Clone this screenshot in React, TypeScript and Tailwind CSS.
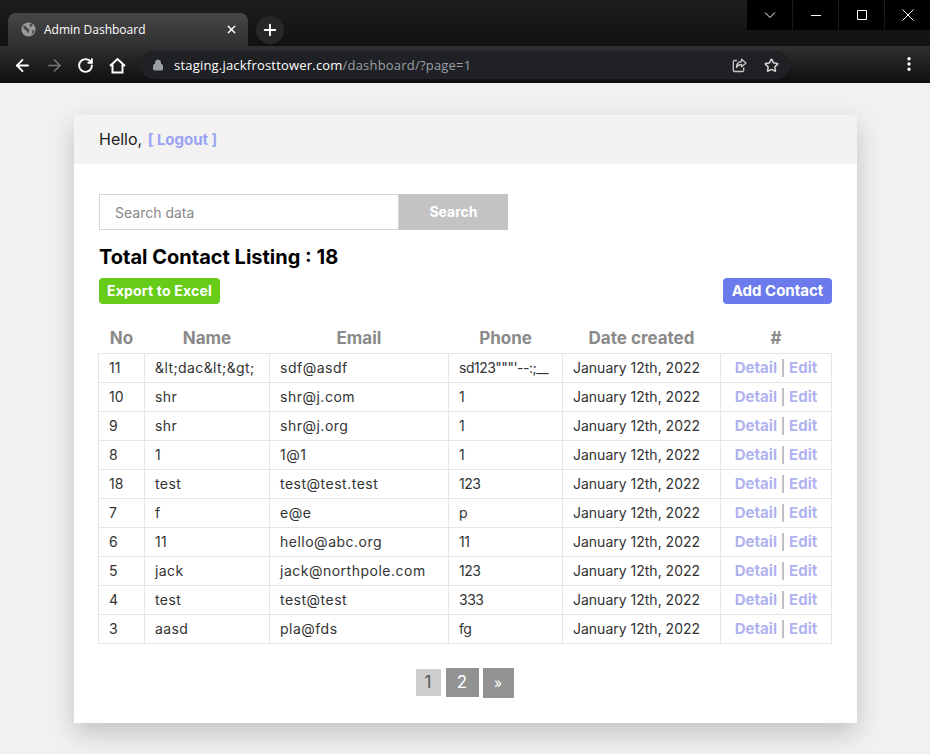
import { ArrowLeft, ArrowRight, RotateCw, Lock, Star, EllipsisVertical, X, Plus } from 'lucide-react';

const rows = [
  ['11', '&lt;dac&lt;&gt;', 'sdf@asdf', 'sd123"""\'--:;__'],
  ['10', 'shr', 'shr@j.com', '1'],
  ['9', 'shr', 'shr@j.org', '1'],
  ['8', '1', '1@1', '1'],
  ['18', 'test', 'test@test.test', '123'],
  ['7', 'f', 'e@e', 'p'],
  ['6', '11', 'hello@abc.org', '11'],
  ['5', 'jack', 'jack@northpole.com', '123'],
  ['4', 'test', 'test@test', '333'],
  ['3', 'aasd', 'pla@fds', 'fg'],
];

function GlobeIcon() {
  return (
    <svg viewBox="0 0 16 16" className="h-[15px] w-[15px]">
      <circle cx="8" cy="8" r="7.5" fill="#9a9a9a" />
      <path d="M2.5 4.5 5 4l1.5 2.5L9 8l-1 3-1.5 1-.5-3-3-1.5zM9.5 1.5l3 1.5-1 2-2.5-.5zM12 9l2.5-.5-1.5 3.500-1.500 1z" fill="#4a4a4a" />
    </svg>
  );
}

function HomeIcon() {
  return (
    <svg viewBox="0 0 17 17" className="h-[17px] w-[17px]" fill="none" stroke="white" strokeWidth="2" strokeLinejoin="miter">
      <path d="M1 9 8.500 2 16 9M3.500 7.500V15.500h10V7.500" />
    </svg>
  );
}

function ShareIcon() {
  return (
    <svg viewBox="0 0 15 15" className="h-[15px] w-[15px]" fill="none" stroke="#c8c8c8" strokeWidth="1.3">
      <path d="M5 2.500H2.500a1.200 1.200 0 0 0-1.200 1.200v8.600a1.200 1.200 0 0 0 1.200 1.200h8a1.200 1.200 0 0 0 1.200-1.200V9.500" />
      <path d="M9.500 1.200 14 5l-4.500 3.800V6.500C7 6.500 5.500 7.500 4.500 9.500 4.500 6 6.500 3.800 9.500 3.500z" strokeLinejoin="round" />
    </svg>
  );
}

function WindowButton({ path }: { path: string }) {
  return (
    <div className="flex w-[45px] items-center justify-center bg-black">
      <svg viewBox="0 0 12 12" className="h-3 w-3" fill="none" stroke="white" strokeWidth="1">
        <path d={path} />
      </svg>
    </div>
  );
}

function BrowserChrome() {
  return (
    <div className="font-['Open_Sans',sans-serif] text-white">
      {/* Tab strip */}
      <div className="flex h-[46px] justify-between bg-gradient-to-b from-[#1e1e1e] to-[#111111] pl-2">
        <div className="flex items-end">
          <div className="flex h-[33px] w-[240px] items-center rounded-t-lg bg-gradient-to-b from-[#474747] to-[#303030] pl-[13px] pr-2.5">
            <GlobeIcon />
            <span className="ml-2 flex-1 text-xs">Admin Dashboard</span>
            <X className="h-[13px] w-[13px]" strokeWidth={2.5} />
          </div>
          <div className="mb-[2px] ml-2 flex h-7 w-7 items-center justify-center rounded-full bg-[#272727]">
            <Plus className="h-[18px] w-[18px]" strokeWidth={2.5} />
          </div>
        </div>
        <div className="flex h-[30px] gap-px">
          <WindowButton path="M1 3.500 6 8.500 11 3.500" />
          <WindowButton path="M1 6.500H11" />
          <WindowButton path="M1.500 1.500H10.500V10.500H1.500Z" />
          <WindowButton path="M.5.5 11.500 11.500M11.500.5.5 11.500" />
        </div>
      </div>
      {/* Toolbar */}
      <div className="flex h-[37px] items-start bg-gradient-to-b from-[#303030] to-[#0f0f0f] pl-[13px] pr-[13px]">
        <div className="flex h-[38px] items-center">
          <ArrowLeft className="h-[19px] w-[19px]" strokeWidth={2.25} />
          <ArrowRight className="ml-[13px] h-[19px] w-[19px] text-[#777777]" strokeWidth={2} />
          <RotateCw className="ml-[13px] h-[17px] w-[17px]" strokeWidth={2.75} />
          <div className="ml-[15px]"><HomeIcon /></div>
        </div>
        <div className="ml-[14px] mt-[5px] flex h-7 w-[650px] items-center rounded-full bg-[#202124] pl-3 pr-[11px] text-[13px]">
          <Lock className="h-3 w-3 fill-[#9aa0a6] text-[#9aa0a6]" />
          <span className="ml-[10px] flex-1 pt-px tracking-[0.2px]">
            staging.jackfrosttower.com<span className="text-[#9aa0a6]">/dashboard/?page=1</span>
          </span>
          <ShareIcon />
          <Star className="ml-[17px] h-[15px] w-[15px] text-[#d0d0d0]" strokeWidth={2.5} />
        </div>
        <div className="ml-auto mr-[3px] mt-[6px] flex h-6 items-center">
          <EllipsisVertical className="-mr-1 h-[18px] w-[18px]" strokeWidth={2.5} />
        </div>
      </div>
    </div>
  );
}

export default function App() {
  return (
    <div className="min-h-[754px] overflow-hidden bg-[#f1f1f1] font-['Inter',sans-serif] text-black">
      <BrowserChrome />
      <div className="ml-[74px] mt-[32px] w-[783px] bg-white shadow-[0_10px_25px_rgba(0,0,0,0.2)]">
        {/* Card header */}
        <div className="flex h-[49px] items-center bg-[#f2f2f2] px-[25px]">
          <p className="text-base text-[#222222]">
            Hello, <a className="ml-px text-[15px] font-bold text-[#9aa4f5]">[ Logout ]</a>
          </p>
        </div>

        <div className="px-[25px] pb-[25px] pt-[30px]">
          {/* Search */}
          <div className="flex h-9">
            <input
              placeholder="Search data"
              className="h-9 w-[300px] border border-[#d6d6d6] bg-white px-[15px] text-sm placeholder:text-[#888888]"
            />
            <button className="w-[109px] bg-[#c3c3c3] text-sm font-bold text-white">Search</button>
          </div>

          <h2 className="mt-[15px] text-xl font-bold leading-[24px]">Total Contact Listing : 18</h2>

          <div className="mt-[9px] flex items-center justify-between">
            <button className="h-[26px] w-[121px] rounded-[4px] bg-[#66cc18] text-sm font-bold tracking-[0.2px] text-white">Export to Excel</button>
            <button className="h-[26px] w-[109px] rounded-[4px] bg-[#6b7bec] text-[15px] font-bold text-white">Add Contact</button>
          </div>

          {/* Contacts table */}
          <table className="mt-[20px] -ml-px w-[733px] table-fixed border-collapse text-sm text-[#333333]">
            <thead>
              <tr className="h-[29px] text-[17px] font-bold text-[#8a8a8a]">
                <th className="w-[46px] font-bold">No</th>
                <th className="w-[125px] font-bold">Name</th>
                <th className="w-[179px] font-bold">Email</th>
                <th className="w-[114px] font-bold">Phone</th>
                <th className="w-[158px] font-bold">Date created</th>
                <th className="w-[111px] font-bold">#</th>
              </tr>
            </thead>
            <tbody>
              {rows.map((row) => (
                <tr key={row[0]} className="h-[29px]">
                  <td className="border border-[#e6e6e6] px-[10px] py-0">{row[0]}</td>
                  <td className="border border-[#e6e6e6] px-[10px] py-0 tracking-[0.4px]">{row[1]}</td>
                  <td className="border border-[#e6e6e6] px-[10px] py-0 tracking-[0.5px]">{row[2]}</td>
                  <td className="whitespace-nowrap border border-[#e6e6e6] px-[10px] py-0 tracking-[-0.5px]">{row[3]}</td>
                  <td className="border border-[#e6e6e6] px-[10px] py-0">January 12th, 2022</td>
                  <td className="border border-[#e6e6e6] p-0 text-center text-[15px] font-bold text-[#b0b3f0]">
                    Detail <span className="font-normal text-[#9a9a9a]">|</span> Edit
                  </td>
                </tr>
              ))}
            </tbody>
          </table>

          {/* Pagination */}
          <div className="mr-[2px] mt-6 flex items-center justify-center gap-[5px]">
            <span className="flex h-[27px] w-[25px] items-center justify-center bg-[#d0cdcd] text-[17px] text-[#555555]">1</span>
            <span className="flex h-[29px] w-[33px] items-center justify-center bg-[#929292] text-[17px] text-white">2</span>
            <span className="-ml-px flex h-[30px] w-[31px] items-center justify-center bg-[#929292] text-sm text-white">»</span>
          </div>
        </div>
      </div>
    </div>
  );
}
